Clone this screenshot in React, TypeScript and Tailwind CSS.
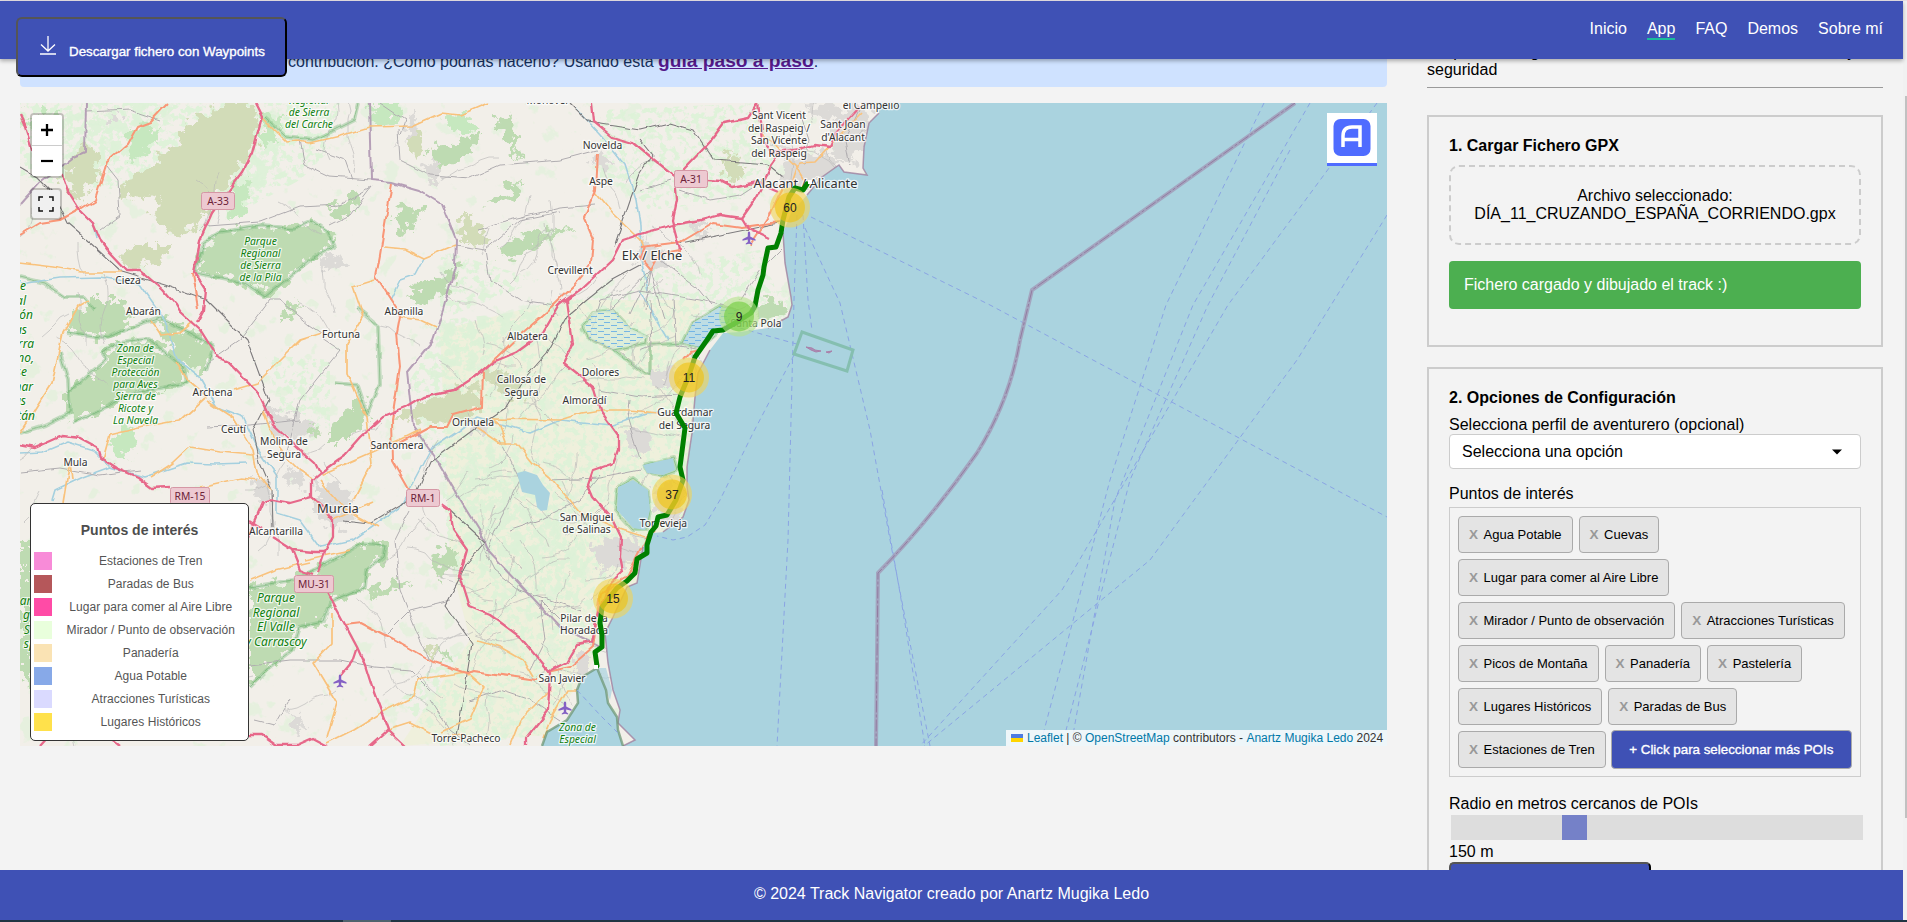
import React from "react";

const SANS = "font-['Liberation_Sans',Arial,sans-serif]";

const LAND =
  "M20 103 L879 103 L879 113 L875 117 L869 123 L864 147 L863 168 L867 175 L844 172 L839 165 L822 177 L807 195 L791 213 L783 233 L785 263 L791 297 L792 305 L788 317 L768 328 L740 332 L723 333 L710 350 L698 373 L695 397 L692 433 L687 467 L687 487 L689 500 L683 517 L663 532 L650 533 L643 547 L637 583 L627 587 L613 617 L605 633 L608 663 L613 690 L620 710 L618 723 L635 740 L623 746 L618 730 L617 717 L608 703 L606 690 L597 668 L582 677 L577 690 L578 703 L567 720 L547 732 L542 746 L20 746 Z";

const RED = [
  "255,103 262,117 252,153 242,172 227,192 212,213 200,240 198,253 194,272 206,290 204,310 197,323",
  "20,115 25,127 32,150 62,175 68,192 78,208 93,223 100,240 110,253 127,271 141,271 163,290 176,305 180,312 200,330 217,357 228,362 258,393 273,425 300,450 315,463 320,473 312,480 312,497 323,507 333,520 333,537 325,552 315,552 292,550 272,537",
  "320,473 345,455 360,438 383,417 405,408 423,397 453,391 473,378 493,362 517,352 543,333 559,305 580,290 612,260 622,240 640,234 673,225 701,220 720,215 742,218 756,198 762,187 771,167 783,150 803,148 815,145 830,147 836,133 860,107",
  "592,103 594,122 612,137 633,143 656,162 675,177 677,200 673,220 681,250",
  "758,103 748,118 724,123 709,143 683,170",
  "707,180 720,181 732,187 758,182 778,191",
  "758,103 762,140 773,153 803,148",
  "742,218 748,228 769,238",
  "567,300 573,343 563,363 593,387 600,410 618,435 618,450 613,463 593,470 588,485 593,497 613,520 621,537 620,557 623,572 607,587 597,617 592,642 577,645 567,662 547,672",
  "440,503 450,510 453,530 467,550 460,575 470,607 490,615 500,622 520,637 550,673 548,710 526,738 526,746",
  "328,593 340,615 357,647 365,665 372,687 388,730 405,746",
  "388,730 370,746",
  "357,647 352,662 341,675",
  "250,735 263,735 277,745 297,745 313,738 328,746",
  "20,445 35,448 62,436 80,438 97,447 100,457 117,468 137,477 152,488 170,487",
  "247,540 263,503 273,500 290,503 312,497",
  "250,520 263,528",
  "292,550 300,570 313,575",
  "325,552 318,573",
  "40,746 50,735 100,730 120,746",
];

const ORANGE = [
  "20,235 40,223 60,220 82,208 95,200 107,162 127,145 137,127 150,122 168,103",
  "392,183 384,230 380,255 376,277 396,308 400,317 397,333 400,367 392,420 393,460 410,490",
  "598,153 596,190 584,217 594,240 592,263 575,285 551,308 520,335 483,370 482,407 453,415 447,427 430,427 400,443",
  "345,625 362,623 400,643 433,662 467,673 473,671 537,680",
  "640,247 681,242 713,223 742,227 779,222",
  "681,250 660,254 651,270 640,258 645,247",
  "192,273 198,308",
  "655,530 647,537 627,577 600,593 597,617 593,647 570,667 547,672",
  "750,245 770,215 779,195 784,186",
  "683,360 690,352 700,350",
];

const YELLOW = [
  "261,117 286,142 298,141 310,143 340,136 369,127 412,126 441,113 460,115 488,103",
  "20,263 53,267 82,272 122,272",
  "455,245 424,258 405,249 384,247",
  "375,280 353,287 361,310 363,317 347,343 347,373 367,417 372,463 353,500",
  "322,333 300,340 257,383 233,390",
  "205,397 180,420 143,427 110,435 103,460",
  "207,400 233,417 253,450 257,473 272,490",
  "150,478 173,463 190,447 220,452 253,455",
  "263,410 274,440 287,457 300,470 312,478",
  "90,300 78,307 63,333 52,383 20,433",
  "492,419 560,420 582,413 600,410 630,410 657,413",
  "477,427 500,443 517,443 533,463 550,477 580,513 613,527 645,537",
  "332,613 332,643 313,663 337,703 327,737",
  "327,743 353,730 380,713 413,697 417,680 440,676 467,672",
  "388,730 410,723 437,737 467,735",
  "440,732 470,718 483,687 467,673",
  "595,192 612,213 640,240 645,252",
  "477,640 500,647 523,660 533,677",
  "543,737 550,720 567,690 590,690",
  "791,187 799,163 815,162 836,140 862,113",
  "762,133 797,167 805,180",
  "312,497 333,520 372,503",
  "320,480 345,510 378,528",
  "305,560 350,550",
  "320,475 350,462 400,440 420,430",
  "250,580 275,570 310,562",
  "200,487 240,478 258,480",
  "63,503 70,460 72,480",
  "150,320 160,335 180,333 193,322",
  "176,362 187,380 207,397",
  "400,317 420,320 435,327",
  "510,746 520,720 540,700 550,690",
  "492,419 500,425 507,445",
];

const PURPLE = [
  "86,103 85,153 73,158 40,182 20,204",
  "369,103 371,180 392,182 420,190 441,203 456,240 455,267 443,310 433,340 407,372 413,427 437,460 460,500 483,537 488,550 560,627 600,647",
];

const RAIL = [
  "207,300 247,340 257,367 269,400 253,430 260,462 272,490 273,527",
  "20,167 37,177 53,193 67,223 87,240 122,272 165,285 207,300",
  "587,300 567,317 547,353 523,380 507,407 473,430 430,462 418,490 400,505 370,523 345,520",
  "569,103 588,122 640,130 669,123 693,130 713,160 742,162 767,164 783,177",
  "640,173 630,200 614,247",
  "640,140 652,155 640,173",
  "447,507 485,542 467,563 445,605 472,643 457,737",
  "681,243 779,223",
  "587,300 612,280 640,265",
];

const RIVERS = [
  "20,453 43,452 67,442 93,450 110,467 143,477 187,463 215,464 247,463",
  "52,500 55,490 80,478 110,467",
  "200,377 217,407 243,417 257,447 277,477 277,513 300,520 320,547 353,540 400,507 430,450 460,430 477,417 530,433 560,420 613,425 647,413 687,410",
  "20,284 60,278 100,277 140,284 165,320 178,360 200,377",
  "97,240 95,228 92,222",
  "424,258 415,275 400,280 390,300",
  "640,225 636,200 625,165 600,135 575,108",
  "640,290 650,310 668,340",
  "640,225 641,260 648,290",
];

const GREY = [
  "86,112 130,110 160,120",
  "107,166 118,180 120,215 100,230",
  "207,226 260,222 300,207 340,205 371,187",
  "300,140 305,165 330,177 371,180",
  "316,150 345,160 352,180",
  "398,130 400,160 430,175 470,178 500,165 560,160 598,150",
  "478,230 500,222 560,208 595,205",
  "371,187 350,215 330,225",
  "455,245 485,250 520,220 560,212",
  "485,250 490,280 520,300 555,305",
  "207,363 240,340 270,300 280,300",
  "287,453 300,400 340,350 322,338",
  "280,300 310,325 322,333",
  "207,427 250,425 300,420",
  "20,472 60,468 100,475 140,470",
  "290,700 275,725 255,720",
  "250,665 290,660 340,660 375,667 410,670 430,690",
  "395,540 400,590 420,640 430,660",
  "410,510 395,540",
  "385,635 410,610 450,600",
  "480,540 495,570 520,590 550,600 580,610",
  "510,530 540,520 580,500 600,475",
  "500,440 520,480 500,520 488,550",
  "550,480 600,478 640,470",
  "560,620 540,600 545,640 530,670",
  "588,338 600,300 640,290 700,300 740,310",
  "650,300 652,345 640,350",
  "673,300 676,345 700,350",
  "600,390 640,397 680,395",
  "630,400 628,420 640,460",
  "380,103 405,120 400,135",
  "470,700 500,690 530,700 560,720",
  "430,700 450,730 470,746",
  "660,260 700,290 712,305",
  "651,270 645,310",
  "651,270 665,320",
  "651,270 630,315",
  "651,270 610,310",
  "790,240 760,270 740,300",
  "680,190 710,200 740,195 770,175",
  "640,190 670,180",
  "860,110 845,140 850,165",
  "800,110 810,140 805,165",
];

const SCRUB = [
  "118,190 180,140 192,120 228,103 255,103 258,133 240,167 212,200 196,227 175,235 153,220 158,193 122,200",
  "61,180 82,143 102,153 98,180 80,202",
  "122,257 135,245 170,245 163,260 130,268",
  "404,145 408,130 422,133 428,148 415,160",
  "457,215 470,215 492,240 475,247 458,238",
  "413,407 433,397 480,383 482,410 447,423 393,417",
  "485,370 510,372 530,395 510,400 488,385",
  "725,165 738,155 745,170 738,182 726,178",
  "430,640 440,650 425,660",
  "720,155 732,152 728,164",
];

const WOOD = [
  "70,320 90,300 123,300 130,327 107,338 67,332",
  "67,393 107,360 103,353 117,343 150,340 183,367 187,383 133,393 73,423 67,407",
  "160,317 213,345 205,370 175,360 165,340",
  "333,423 363,397 367,423 350,440 327,440",
  "250,587 293,580 320,567 363,543 385,545 383,557 367,570 365,587 330,602 323,622 300,627 293,650 267,670 250,687",
  "20,540 32,540 32,690 20,680",
  "196,268 204,243 220,232 261,226 294,228 312,220 327,231 334,247 314,257 294,273 265,297 245,283 196,273",
  "325,210 340,203 355,190 362,200 340,222",
  "390,215 415,205 425,212 408,232 395,230",
  "500,245 520,238 540,230 575,228 540,245 505,262",
  "410,295 440,275 458,265 450,290 420,305",
  "430,150 460,140 483,133 470,155 440,170",
  "497,120 512,112 520,160 505,140",
  "433,560 450,540 457,560 440,580",
  "484,205 515,185 525,180 515,200",
  "293,430 315,425 318,432 300,436",
  "280,320 295,300 300,305 290,320",
  "365,590 395,582 415,583 390,592 370,600",
  "430,640 450,660 445,662",
  "755,305 775,295 788,315 760,320",
];

const PALE = [
  "369,103 405,103 400,120 371,126",
  "110,440 130,427 137,440 127,460 118,455",
  "30,118 60,110 58,135 40,150",
  "262,115 282,118 275,140 262,150",
  "236,185 250,180 245,210 225,222",
  "130,130 160,128 150,150 128,160",
  "20,110 30,118 24,126",
  "440,118 460,112 480,125 462,135",
];

const OUTLINES = [
  "196,268 204,243 220,232 261,226 294,228 312,220 327,231 334,247 314,257 294,273 265,297 245,283 196,273 196,268",
  "250,587 293,580 320,567 363,543 385,545 383,557 367,570 365,587 330,602 323,622 300,627 293,650 267,670 250,687",
  "20,433 45,425 70,413 68,380 60,353",
  "67,393 107,360 103,353 117,343 150,340 183,367 187,383 133,393 73,423",
  "67,332 107,338 130,327 160,317 213,345 205,370",
  "20,277 45,283 65,297 85,297 95,310",
  "265,117 286,137 314,140 335,130 355,120 359,103",
  "357,308 378,325 380,385 367,415 357,385 335,383",
  "582,327 593,312 613,310 630,328 648,337 647,343 613,350 588,338 582,327",
  "613,350 645,375 650,375 650,345 683,343",
  "683,343 693,323 720,307 737,310 720,330 700,347 683,343",
  "618,487 633,478 648,490 650,510 647,530 633,530 615,510 618,487",
  "643,465 673,458 677,470 663,475 647,473 643,465",
];

const URBAN = [
  "315,480 345,490 360,515 340,530 318,520",
  "265,405 285,410 310,425 305,440 275,435",
  "290,465 310,480 300,490 285,475",
  "640,240 660,245 663,262 650,272 638,262",
  "785,160 820,150 845,165 822,177 807,190 790,200 778,180",
  "800,105 870,108 864,147 850,165 835,155 830,120",
  "588,545 620,535 645,545 630,565 600,570",
  "625,430 650,430 655,450 640,455 628,445",
  "650,372 675,365 680,385 655,385",
  "107,110 115,110 120,125 112,125",
  "420,170 435,162 445,175 428,182",
  "575,655 588,655 588,670 576,675",
  "250,480 268,480 270,500 255,498",
  "470,420 490,420 488,435 472,432",
  "660,480 683,490 685,515 660,528 652,500",
  "320,260 335,250 345,262 328,272",
  "590,155 602,150 610,165 596,168",
  "693,230 705,225 712,235 700,240",
  "290,710 300,712 307,727 295,732",
  "400,145 415,112 418,128",
];

const FERRY = [
  "811,217 990,305 1387,517",
  "805,228 840,303 870,430 890,540 930,746",
  "797,215 794,300 788,540 777,746",
  "803,215 808,300 812,330",
  "1264,103 1166,305 1110,480 1040,746",
  "1310,103 1193,305 1115,500 1071,746",
  "1377,103 1228,305 1062,590 920,746",
  "1387,215 1297,360 1150,560 924,746",
  "1290,150 1208,305 1130,480 1062,746",
  "794,355 753,433 720,500 705,525 687,537 673,540 657,536",
  "740,328 800,345",
  "882,490 900,593 925,746",
  "577,690 600,715 618,733",
];

type Label = [number, number, string, number?];

const TOWNS: Label[] = [
  [548, 104, "Monòver"],
  [602.5, 149, "Novelda"],
  [601, 185, "Aspe"],
  [570, 274, "Crevillent"],
  [128, 284, "Cieza"],
  [143.5, 315, "Abarán"],
  [404, 315, "Abanilla"],
  [341, 338, "Fortuna"],
  [212.5, 396, "Archena"],
  [233.5, 433, "Ceutí"],
  [284, 445, "Molina de"],
  [284, 458, "Segura"],
  [75.5, 466, "Mula"],
  [397, 449, "Santomera"],
  [473, 426, "Orihuela"],
  [338, 513, "Murcia", 13],
  [276, 535, "Alcantarilla"],
  [527.5, 340, "Albatera"],
  [521.5, 383, "Callosa de"],
  [521.5, 396, "Segura"],
  [600.5, 376, "Dolores"],
  [584.5, 404, "Almoradí"],
  [756, 327, "Santa Pola"],
  [685, 416, "Guardamar"],
  [684.5, 428.5, "del Segura"],
  [586.5, 520.5, "San Miguel"],
  [586.5, 533, "de Salinas"],
  [663.5, 527, "Torrevieja"],
  [584, 621.5, "Pilar de la"],
  [584, 634, "Horadada"],
  [562, 682, "San Javier"],
  [466, 742, "Torre-Pacheco"],
  [779, 119, "Sant Vicent"],
  [779, 131.5, "del Raspeig /"],
  [779, 144, "San Vicente"],
  [779, 157, "del Raspeig"],
  [843, 128, "Sant Joan"],
  [843, 140.5, "d'Alacant"],
  [871, 109, "el Campello"],
  [805.5, 187.5, "Alacant / Alicante", 12.8],
  [652, 260, "Elx / Elche", 12.8],
];

const PARKS: Label[] = [
  [309, 104, "Regional", 10.3],
  [309, 116, "de Sierra", 10.3],
  [309, 128, "del Carche", 10.3],
  [260.5, 245, "Parque", 10.3],
  [260.5, 257, "Regional", 10.3],
  [260.5, 269, "de Sierra", 10.3],
  [260.5, 281, "de la Pila", 10.3],
  [135.5, 352, "Zona de", 10.3],
  [135.5, 364, "Especial", 10.3],
  [135.5, 376, "Protección", 10.3],
  [135.5, 388, "para Aves", 10.3],
  [135.5, 400, "Sierra de", 10.3],
  [135.5, 412, "Ricote y", 10.3],
  [135.5, 424, "La Navela", 10.3],
  [276, 602, "Parque", 12],
  [276, 616.5, "Regional", 12],
  [276, 631, "El Valle", 12],
  [276, 645.5, "y Carrascoy", 12],
  [577.5, 731, "Zona de", 10.3],
  [577.5, 743, "Especial", 10.3],
];

const EDGE_LABELS: [number, number, string][] = [
  [26, 290, "de"],
  [26, 305, "al"],
  [33, 319, "ón"],
  [27, 334, "as"],
  [34, 348, "erra"],
  [34, 362, "no,"],
  [27, 376, "se"],
  [33, 391, "nar"],
  [26, 405, "as"],
  [35, 420, "tán"],
  [38, 605, "arq"],
  [33, 619, "gi"],
  [33, 634, "Si"],
  [36, 648, "sp"],
];

const SHIELDS: [number, number, number, string][] = [
  [201, 192, 34, "A-33"],
  [674, 170, 34, "A-31"],
  [170, 487, 40, "RM-15"],
  [406, 489, 34, "RM-1"],
  [294, 575, 40, "MU-31"],
];

const CLUSTERS = [
  { x: 790, y: 208, n: 60, green: false },
  { x: 739, y: 317, n: 9, green: true },
  { x: 689, y: 378, n: 11, green: false },
  { x: 672, y: 495, n: 37, green: false },
  { x: 613, y: 599, n: 15, green: false },
];

const TRACK =
  "807,184 803,190 795,188 789,197 783,220 781,233 776,247 768,248 764,267 763,275 758,290 755,306 751,313 737,322 723,330 713,331 707,340 695,357 689,375 680,397 676,413 685,428 680,467 683,480 676,500 667,515 658,517 656,526 651,532 647,545 647,553 637,559 635,573 627,581 617,588 602,607 600,623 602,635 602,647 595,652 597,666";

function rng(seed: number) {
  let s = seed;
  return () => {
    s = (s * 16807) % 2147483647;
    return s / 2147483647;
  };
}

/* Local roads: short wandering lines, denser around the southern plain. */
function localRoads() {
  const r = rng(4217);
  const out: string[] = [];
  for (let i = 0; i < 190; i++) {
    let x = i % 3 === 0 ? 30 + r() * 840 : 420 + r() * 300;
    let y = i % 3 === 0 ? 110 + r() * 630 : 270 + r() * 460;
    let a = r() * Math.PI * 2;
    const pts = [`${x.toFixed(0)},${y.toFixed(0)}`];
    const n = 3 + Math.floor(r() * 6);
    for (let k = 0; k < n; k++) {
      a += (r() - 0.5) * 0.9;
      x += Math.cos(a) * 9;
      y += Math.sin(a) * 9;
      pts.push(`${x.toFixed(0)},${y.toFixed(0)}`);
    }
    out.push(pts.join(" "));
  }
  return out;
}
const LOCAL = localRoads();

function Lines({ items, stroke, width, dash, opacity }: { items: string[]; stroke: string; width: number; dash?: string; opacity?: number }) {
  return (
    <g fill="none" stroke={stroke} strokeWidth={width} strokeDasharray={dash} opacity={opacity} strokeLinejoin="round">
      {items.map((p, i) => (
        <polyline key={i} points={p} />
      ))}
    </g>
  );
}

function Polys({ items, fill }: { items: string[]; fill: string }) {
  return (
    <g fill={fill}>
      {items.map((p, i) => (
        <polygon key={i} points={p} />
      ))}
    </g>
  );
}

function Plane({ x, y }: { x: number; y: number }) {
  return (
    <path
      transform={`translate(${x} ${y})`}
      fill="#8461c4"
      d="M0-6.5c.9 0 1.2.9 1.2 2V-1.500l5.300 2.700v1.500L1.200 1.500V4l2 1.400v1.100L0 5.700l-3.200.8V5.400l2-1.400V1.500l-5.300 1.200V1.200L-1.200-1.500v-3c0-1.100.3-2 1.200-2z"
    />
  );
}

function MapCanvas() {
  return (
    <svg className="block h-full w-full" viewBox="20 103 1367 643" fontFamily="'Noto Sans', sans-serif">
      <defs>
        <clipPath id="land">
          <path d={LAND} />
        </clipPath>
        <clipPath id="plain">
          <path d="M440 330 L560 300 L640 290 L700 300 L790 290 L800 330 L700 340 L695 400 L690 530 L640 550 L600 640 L590 660 L545 735 L440 746 L400 700 L440 660 L480 640 L450 560 L440 470 L420 440 L410 380 Z M20 103 L260 103 L250 160 L200 190 L120 190 L20 180 Z M262 103 L340 103 L330 150 L300 180 L262 200 L225 220 L240 170 Z M600 110 L760 103 L780 160 L740 200 L650 210 L600 180 Z M265 355 L330 360 L330 430 L285 430 Z M640 270 L760 250 L780 300 L640 300 Z M440 250 L540 280 L440 320 Z" />
        </clipPath>
        <clipPath id="hills">
          <path d="M480 440 L520 470 L580 530 L590 560 L570 600 L520 600 L470 560 L450 500 Z M440 320 L540 310 L520 340 L470 370 L430 380 Z M100 103 L180 103 L120 160 L60 180 L40 130 Z M240 103 L290 120 L270 180 L230 215 L215 200 Z" />
        </clipPath>
        <filter id="speckle" x="0" y="0" width="100%" height="100%">
          <feTurbulence type="fractalNoise" baseFrequency="0.15" numOctaves="3" seed="8" />
          <feColorMatrix values="0 0 0 0 .72  0 0 0 0 .89  0 0 0 0 .69  11 0 0 0 -5.500" />
        </filter>
        <filter id="thicket" x="0" y="0" width="100%" height="100%">
          <feTurbulence type="fractalNoise" baseFrequency="0.09" numOctaves="4" seed="14" />
          <feColorMatrix values="0 0 0 0 .72  0 0 0 0 .88  0 0 0 0 .68  12 0 0 0 -5.600" />
        </filter>
        <filter id="patches" x="0" y="0" width="100%" height="100%">
          <feTurbulence type="fractalNoise" baseFrequency="0.05" numOctaves="4" seed="21" />
          <feColorMatrix values="0 0 0 0 .76  0 0 0 0 .88  0 0 0 0 .71  14 0 0 0 -8.900" />
        </filter>
        <filter id="rough" x="-5%" y="-5%" width="110%" height="110%">
          <feTurbulence type="fractalNoise" baseFrequency="0.1" numOctaves="4" seed="3" />
          <feDisplacementMap in="SourceGraphic" scale="26" xChannelSelector="R" yChannelSelector="G" />
        </filter>
        <filter id="wavy" x="-2%" y="-2%" width="104%" height="104%">
          <feTurbulence type="fractalNoise" baseFrequency="0.06" numOctaves="2" seed="5" />
          <feDisplacementMap in="SourceGraphic" scale="6" xChannelSelector="R" yChannelSelector="G" />
        </filter>
        <pattern id="marsh" width="13" height="6" patternUnits="userSpaceOnUse">
          <path d="M0 1.500h6M6 4.500h6" stroke="#6bb0e6" strokeWidth="0.9" />
        </pattern>
      </defs>
      <rect x="20" y="103" width="1367" height="643" fill="#aad3df" />
      <path d={LAND} fill="#f2efe9" />
      <g clipPath="url(#land)">
        <path d="M440 330 L560 300 L700 300 L695 400 L690 530 L600 650 L545 735 L400 746 L470 640 L450 560 Z" fill="#eef0d8" opacity=".8" />
        <rect x="20" y="103" width="870" height="643" filter="url(#patches)" opacity=".75" />
        <g clipPath="url(#plain)">
          <rect x="20" y="103" width="870" height="643" filter="url(#speckle)" opacity=".9" />
        </g>
        <g clipPath="url(#hills)">
          <rect x="20" y="103" width="870" height="643" filter="url(#thicket)" opacity=".9" />
        </g>
        <g filter="url(#rough)">
          <Polys items={PALE} fill="#c6e8bf" />
          <Polys items={SCRUB} fill="#d2dcb8" />
          <Polys items={WOOD} fill="#bedbb2" />
          <Polys items={URBAN} fill="#dcdad7" />
        </g>
        <g filter="url(#wavy)">
          <Lines items={OUTLINES} stroke="#7dbb80" width={4} opacity={0.4} />
          <Lines items={OUTLINES} stroke="#5aa75f" width={1} opacity={0.45} />
          <Lines items={RIVERS} stroke="#a5d0df" width={1.6} />
          <Lines items={LOCAL} stroke="#b9b7b8" width={0.8} opacity={0.8} />
          <Lines items={GREY} stroke="#b0adb0" width={1} />
        </g>
        <g fill="#aad3df">
          <polygon points="517,473 525,471 537,475 543,485 550,493 547,510 541,511 537,507 535,495 522,492" />
          <polygon points="618,487 633,480 648,490 650,510 645,530 633,528 617,510" />
          <polygon points="643,465 673,458 675,470 663,475 647,473" />
          <polygon points="597,668 606,668 612,690 610,700 606,690" opacity=".7" />
        </g>
        <g>
          <polygon points="585,327 593,312 613,310 630,328 648,337 630,346 613,349 590,338" fill="#d9ecd9" opacity=".8" />
          <polygon points="683,343 693,323 720,307 737,310 720,330 700,347" fill="#bddde4" />
          <polygon points="585,327 593,312 613,310 630,328 648,337 630,346 613,349 590,338" fill="url(#marsh)" />
          <polygon points="683,343 693,323 720,307 737,310 720,330 700,347" fill="url(#marsh)" />
        </g>
        <g filter="url(#wavy)">
          <Lines items={PURPLE} stroke="#b097b2" width={2} opacity={0.9} />
          <Lines items={RAIL} stroke="#7d7b7d" width={1.1} />
          <Lines items={YELLOW} stroke="#f9c27c" width={1.7} />
          <Lines items={ORANGE} stroke="#f99677" width={2} />
          <Lines items={RED} stroke="#e7688a" width={2.3} />
        </g>
      </g>
      <path
        d="M879 113 L875 117 L869 123 L864 147 L863 168 L867 175 L844 172 L839 165 L822 177 L807 195 M783 233 L785 263 L791 297 L792 305 L788 317 L768 328 M710 350 L698 373 L695 397 L692 433 L687 467 L687 487 L689 500 L683 517 L663 532 M643 547 L637 583 L627 587 L613 617 L605 633 L608 663 L613 690 L620 710 L618 723 L635 740 L623 746"
        fill="none"
        stroke="#a0819f"
        strokeWidth="1.5"
        opacity=".8"
      />
      <path
        d="M597 668 L582 677 L577 690 L578 703 L567 720 L547 732 L542 746 M597 668 L606 690 L608 703 L617 717 L618 730 L623 746"
        fill="none"
        stroke="#68936f"
        strokeWidth="2.5"
        opacity=".7"
      />
      <Lines items={FERRY} stroke="#8aa4e4" width={1} dash="5 4" />
      <polygon points="802,332 853,350 847,371 794,354" fill="none" stroke="#85bfb0" strokeWidth="3" />
      <path d="M806 347l6 1 3 2 6 1-5 1-5-2zM826 352l6-1-3 2z" fill="#a98fb8" stroke="#a97fa8" strokeWidth="1" />
      <path d="M1295 103 L1032 290 L1020 340 Q1010 400 977 453 Q930 520 878 573 L876 746" fill="none" stroke="#a29cba" strokeWidth="4" opacity=".85" />
      <path d="M1295 103 L1032 290 L1020 340 Q1010 400 977 453 Q930 520 878 573 L876 746" fill="none" stroke="#8f7099" strokeWidth="1" strokeDasharray="12 2 3 2" opacity=".8" />
      {SHIELDS.map(([x, y, w, t]) => (
        <g key={t}>
          <rect x={x + 0.5} y={y + 0.5} width={w - 1} height="17" rx="2" fill="#edc9d1" stroke="#d597a5" />
          <text x={x + w / 2} y={y + 13} textAnchor="middle" fontSize="10.3" fill="#6c2238">
            {t}
          </text>
        </g>
      ))}
      <Plane x={749} y={238} />
      <Plane x={340} y={681} />
      <Plane x={565} y={708} />
      <g textAnchor="middle" paintOrder="stroke" stroke="#ffffff" strokeOpacity=".75" strokeWidth="2.5" strokeLinejoin="round">
        {TOWNS.map(([x, y, t, s], i) => (
          <text key={i} x={x} y={y} fontSize={s ?? 10.3} fill="#333333">
            {t}
          </text>
        ))}
        {PARKS.map(([x, y, t, s], i) => (
          <text key={i} x={x} y={y} fontSize={s} fontStyle="italic" fill="#108010">
            {t}
          </text>
        ))}
      </g>
      <g textAnchor="end" fontStyle="italic" fontSize="12" fill="#108010" paintOrder="stroke" stroke="#ffffff" strokeOpacity=".7" strokeWidth="2">
        {EDGE_LABELS.map(([x, y, t], i) => (
          <text key={i} x={x} y={y}>
            {t}
          </text>
        ))}
      </g>
      <polyline points={TRACK} fill="none" stroke="#008000" strokeWidth="5" strokeLinejoin="round" strokeLinecap="round" />
      <rect x="808" y="180" width="4" height="4" fill="#ffffff" />
      <rect x="594" y="665" width="4" height="4" fill="#ffffff" />
      <g fontFamily="'Liberation Sans', Arial, sans-serif" fontSize="12" textAnchor="middle">
        {CLUSTERS.map((c) => (
          <g key={c.n}>
            <circle cx={c.x} cy={c.y - 0.5} r="20" fill={c.green ? "rgba(181,226,140,.6)" : "rgba(241,211,87,.6)"} />
            <circle cx={c.x} cy={c.y - 0.5} r="15" fill={c.green ? "rgba(110,204,57,.6)" : "rgba(240,194,12,.6)"} />
            <text x={c.x} y={c.y + 4} fill="#222222">
              {c.n}
            </text>
          </g>
        ))}
      </g>
    </svg>
  );
}

const LEGEND = [
  ["bg-[#f88bd8]", "Estaciones de Tren"],
  ["bg-[#b5575a]", "Paradas de Bus"],
  ["bg-[#ff4ba6]", "Lugar para comer al Aire Libre"],
  ["bg-[#e9ffdc]", "Mirador / Punto de observación"],
  ["bg-[#fae3b4]", "Panadería"],
  ["bg-[#87a9e8]", "Agua Potable"],
  ["bg-[#dadaff]", "Atracciones Turísticas"],
  ["bg-[#ffe14b]", "Lugares Históricos"],
];

const POIS = [
  "Agua Potable",
  "Cuevas",
  "Lugar para comer al Aire Libre",
  "Mirador / Punto de observación",
  "Atracciones Turísticas",
  "Picos de Montaña",
  "Panadería",
  "Pastelería",
  "Lugares Históricos",
  "Paradas de Bus",
  "Estaciones de Tren",
];

function MapPanel() {
  return (
    <div className="relative mt-4 h-[643px] w-[1367px] overflow-hidden">
      <MapCanvas />
      <div className="absolute left-[10px] top-[10px] flex flex-col gap-[11px]">
        <div className="w-[34px] rounded-[4px] border-2 border-black/20 bg-clip-padding">
          <div className="flex h-[31px] items-center justify-center rounded-t-[2px] border-b border-[#ccc] bg-white">
            <svg width="12" height="12" viewBox="0 0 12 12">
              <path d="M6 0v12M0 6h12" stroke="#000" strokeWidth="2.3" />
            </svg>
          </div>
          <div className="flex h-[30px] items-center justify-center rounded-b-[2px] bg-white">
            <svg width="12" height="12" viewBox="0 0 12 12">
              <path d="M0 6h12" stroke="#000" strokeWidth="2.2" />
            </svg>
          </div>
        </div>
        <div className="mt-[-1px] flex h-8 w-8 items-center justify-center rounded-[4px] border-2 border-black/20 bg-[#f0f0f0] bg-clip-padding">
          <svg width="16" height="16" viewBox="0 0 16 16">
            <path d="M1 5V1h4M11 1h4v4M15 11v4h-4M5 15H1v-4" fill="none" stroke="#111" strokeWidth="1.5" />
          </svg>
        </div>
      </div>

      <div className="absolute right-[10px] top-[10px] flex h-[53px] w-[50px] items-start justify-center border-b-[3px] border-[#4f6cff] bg-white pt-[6px]">
        <svg width="38" height="37" viewBox="0 0 38 37">
          <rect x=".5" width="37" height="37" rx="7" fill="#4f6cff" />
          <path d="M10 28V17q0-9 9-9h8v20M10 20.500h17" fill="none" stroke="#fff" strokeWidth="3.5" />
        </svg>
      </div>

      <div className="absolute left-[10px] top-[400px] h-[238px] w-[219px] rounded-[5px] border border-[#333] bg-white text-[#555]">
        <div className="mb-[12px] mt-[16px] text-center text-[14px] font-bold leading-[20px] text-[#4d4d4d]">Puntos de interés</div>
        <div className="flex flex-col gap-[5px] pl-[3px]">
          {LEGEND.map(([c, t]) => (
            <div key={t} className="flex h-[18px] items-center">
              <span className={"h-[18px] w-[18px] " + c} />
              <span className="mt-[-1px] w-[202px] whitespace-nowrap pl-[2px] text-center text-[12px] leading-[18px] tracking-[0.05px]">{t}</span>
            </div>
          ))}
        </div>
      </div>

      <div className="absolute bottom-0 right-0 flex h-4 w-[381px] items-center whitespace-pre bg-white/80 pl-[5px] text-[12px] leading-4 text-[#333]">
        <svg className="mr-1" width="12" height="8" viewBox="0 0 12 8">
          <path fill="#4c7be1" d="M0 0h12v4H0z" />
          <path fill="#ffd500" d="M0 4h12v4H0z" />
        </svg>
        <span className="text-[#0078a8]">Leaflet</span>
        <span> | © </span>
        <span className="text-[#0078a8]">OpenStreetMap</span>
        <span> contributors - </span>
        <span className="text-[#0078a8]">Anartz Mugika Ledo</span>
        <span> 2024</span>
      </div>
    </div>
  );
}

function Sidebar() {
  return (
    <aside className="w-[456px] text-[16px] leading-[18px] text-black">
      <p className="mt-[-17px] h-[46px] border-b border-[#9a9a9a]">
        <span className="block w-[450px] whitespace-nowrap pt-[1px] [text-align-last:justify]">La primera regla en la montaña es la cautela en ruta y tu</span>
        seguridad
      </p>
      <section className="mt-[27px] h-[232px] border-2 border-[#ccc] px-[20px] pt-[20px]">
        <h2 className="font-bold leading-[18px]">1. Cargar Fichero GPX</h2>
        <div className="mt-[10px] flex h-[80px] flex-col items-center justify-center rounded-[10px] border-2 border-dashed border-[#ccc] text-center">
          <span>Archivo seleccionado:</span>
          <span>DÍA_11_CRUZANDO_ESPAÑA_CORRIENDO.gpx</span>
        </div>
        <div className="mt-4 flex h-12 items-center rounded-[4px] bg-[#4caf50] pl-[15px] pb-[1px] text-white">Fichero cargado y dibujado el track :)</div>
      </section>

      <section className="mt-5 h-[600px] border-2 border-[#ccc] px-[20px] pt-[20px]">
        <h2 className="font-bold leading-[18px]">2. Opciones de Configuración</h2>
        <div className="mt-[9px]">Selecciona perfil de aventurero (opcional)</div>
        <div className="flex h-[35px] items-center justify-between rounded-[4px] border border-[#ccc] bg-white pl-[12px] pr-[18px]">
          <span>Selecciona una opción</span>
          <svg width="10" height="6" viewBox="0 0 10 6">
            <path d="M0 .5h10L5 5.500z" fill="#000" />
          </svg>
        </div>
        <div className="mt-[16px]">Puntos de interés</div>
        <div className="mt-[4px] flex h-[270px] flex-wrap content-start items-center gap-x-[6px] gap-y-[6px] border border-[#ccc] pl-[8px] pt-[8px] text-[13px]">
          {POIS.map((p) => (
            <span key={p} className="flex h-[37px] items-center rounded-[4px] border border-[#aaa] bg-[#e4e4e4] px-[10px] text-[13px]">
              <b className="mr-[5.5px] text-[13.5px] text-[#999]">X</b>
              {p}
            </span>
          ))}
          <span className="-my-px ml-[-1px] flex h-[39px] w-[241px] items-center justify-center rounded-[4px] border border-[#aaa] bg-[#3f51b5] text-[13.333px] text-white [-webkit-text-stroke:0.35px_white]">
            + Click para seleccionar más POIs
          </span>
        </div>
        <div className="mt-[18px]">Radio en metros cercanos de POIs</div>
        <div className="ml-[2px] mt-[2px] h-[25px] w-[412px] bg-[#ddd] pl-[111px]">
          <div className="h-[25px] w-[25px] bg-[#7581c8]" />
        </div>
        <div className="mt-[3px]">150 m</div>
        <div className="mt-px h-[60px] w-[202px] rounded-[5px] border-2 border-b-black border-l-[#555] border-r-black border-t-[#555] bg-[#3f51b5]" />
      </section>
    </aside>
  );
}

export default function App() {
  return (
    <div className={`relative flex h-[922px] w-[1907px] flex-col overflow-hidden bg-[#f3f3f3] ${SANS}`}>
      <div className="h-px shrink-0 bg-[#e6dfe3]" />
      <header className="relative z-10 flex h-[58px] w-[1903px] shrink-0 items-center justify-end gap-5 bg-[#3f51b5] pb-[2px] pr-5 text-[16px] leading-[18px] text-white shadow-[0_2px_4px_rgba(0,0,0,0.3)]">
        <span>Inicio</span>
        <span className="relative">
          App
          <i className="absolute inset-x-0 bottom-[-2px] h-[2px] bg-[#1abc9c]" />
        </span>
        <span>FAQ</span>
        <span>Demos</span>
        <span>Sobre mí</span>
      </header>

      <button className="absolute left-[16px] top-[17px] z-20 flex h-[60px] w-[271px] items-center rounded-[6px] border-2 border-b-black border-l-[#555] border-r-black border-t-[#555] bg-[#3f51b5] pl-[22px] text-white">
        <svg className="mb-[3px]" width="16" height="19" viewBox="0 0 16 19">
          <path d="M8 0v14.500M1 8.500l7 6.500 7-6.500M0 18h16" fill="none" stroke="#fff" strokeWidth="1.3" />
        </svg>
        <span className="ml-[13px] mt-[9px] whitespace-nowrap text-[13.333px] leading-4 [-webkit-text-stroke:0.35px_white]">
          Descargar fichero con Waypoints
        </span>
      </button>

      <main className="flex h-[811px] w-[1903px] shrink-0 gap-[40px] overflow-hidden pl-5">
        <div>
          <div className="flex h-[28px] w-[1367px] items-start overflow-hidden whitespace-pre rounded-b-[4px] bg-[#cfe2ff] pl-[268px] text-[16px] leading-[18px] text-[#15305e]">
            <p className="mt-[-7px] flex items-baseline">
              contribución. ¿Cómo podrías hacerlo? Usando esta <b className="text-[19.2px] text-[#551a8b] underline">guía paso a paso</b>.
            </p>
          </div>
          <MapPanel />
        </div>
        <Sidebar />
      </main>

      <footer className="flex h-[50px] w-[1903px] shrink-0 items-center justify-center bg-[#3f51b5] pb-[2px] text-[16px] text-white">
        © 2024 Track Navigator creado por Anartz Mugika Ledo
      </footer>
      <div className="h-[2px] shrink-0 bg-[#203543] pl-[343px]">
        <div className="h-[2px] w-[48px] bg-[#4f626d]" />
      </div>
      <div className="absolute right-0 top-px h-[919px] w-1 bg-[#f1f1f1] pl-[2px] pt-[95px]">
        <div className="h-[722px] bg-[#c1c1c1]" />
      </div>
    </div>
  );
}
